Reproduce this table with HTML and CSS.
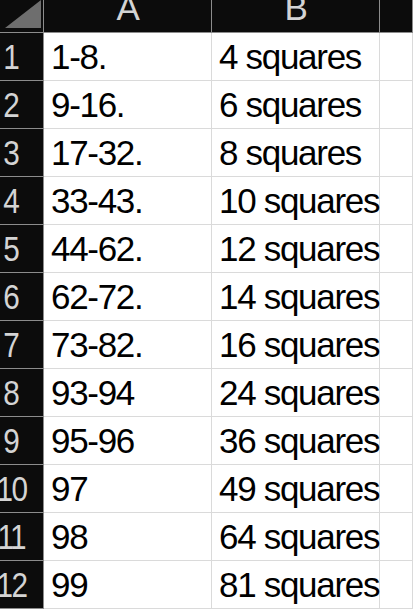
FILE: index.html
```html
<!DOCTYPE html>
<html>
<head>
<meta charset="utf-8">
<link rel="stylesheet" href="styles.css">
</head>
<body>
<div class="sheet">
  <div class="corner"><span class="tri"></span></div>
  <div class="colhead">A</div>
  <div class="colhead">B</div>
  <div class="colhead"></div>

  <div class="rowhead"><span class="num">1</span></div><div class="cell">1-8.</div><div class="cell">4 squares</div><div class="cell"></div>
  <div class="rowhead"><span class="num">2</span></div><div class="cell">9-16.</div><div class="cell">6 squares</div><div class="cell"></div>
  <div class="rowhead"><span class="num">3</span></div><div class="cell">17-32.</div><div class="cell">8 squares</div><div class="cell"></div>
  <div class="rowhead"><span class="num">4</span></div><div class="cell">33-43.</div><div class="cell">10 squares</div><div class="cell"></div>
  <div class="rowhead"><span class="num">5</span></div><div class="cell">44-62.</div><div class="cell">12 squares</div><div class="cell"></div>
  <div class="rowhead"><span class="num">6</span></div><div class="cell">62-72.</div><div class="cell">14 squares</div><div class="cell"></div>
  <div class="rowhead"><span class="num">7</span></div><div class="cell">73-82.</div><div class="cell">16 squares</div><div class="cell"></div>
  <div class="rowhead"><span class="num">8</span></div><div class="cell">93-94</div><div class="cell">24 squares</div><div class="cell"></div>
  <div class="rowhead"><span class="num">9</span></div><div class="cell">95-96</div><div class="cell">36 squares</div><div class="cell"></div>
  <div class="rowhead"><span class="num">10</span></div><div class="cell">97</div><div class="cell">49 squares</div><div class="cell"></div>
  <div class="rowhead"><span class="num">11</span></div><div class="cell">98</div><div class="cell">64 squares</div><div class="cell"></div>
  <div class="rowhead"><span class="num">12</span></div><div class="cell">99</div><div class="cell">81 squares</div><div class="cell"></div>
</div>
</body>
</html>
```
FILE: styles.css
```css
html, body {
  margin: 0;
  padding: 0;
  background: #ffffff;
  overflow: hidden;
}
.sheet {
  display: grid;
  grid-template-columns: 44px 168px 168px 1fr;
  grid-template-rows: 33px repeat(12, 48px);
  width: 413px;
  font-family: "Liberation Sans", Arial, sans-serif;
  font-size: 35px;
  letter-spacing: -1.3px;
}
.corner, .colhead, .rowhead {
  background: #0c0c0c;
  color: #d4d4d4;
  box-sizing: border-box;
  border-right: 1px solid #8c8c8c;
  border-bottom: 1px solid #8c8c8c;
  overflow: hidden;
}
.corner {
  position: relative;
}
.tri {
  position: absolute;
  left: 5px;
  top: 0;
  width: 0;
  height: 0;
  border-left: 36px solid transparent;
  border-bottom: 28px solid #6e6e6e;
}
.colhead {
  text-align: center;
  line-height: 16px;
}
.rowhead {
  display: flex;
  justify-content: center;
  align-items: center;
  padding-right: 21px;
  line-height: 47px;
  white-space: nowrap;
}
.num {
  display: block;
  flex: none;
  letter-spacing: -2px;
  transform: scaleX(0.85);
}
.cell {
  box-sizing: border-box;
  border-right: 1px solid #dadada;
  border-bottom: 1px solid #dadada;
  color: #000000;
  line-height: 47px;
  padding-left: 7px;
  white-space: nowrap;
  overflow: visible;
}
```
